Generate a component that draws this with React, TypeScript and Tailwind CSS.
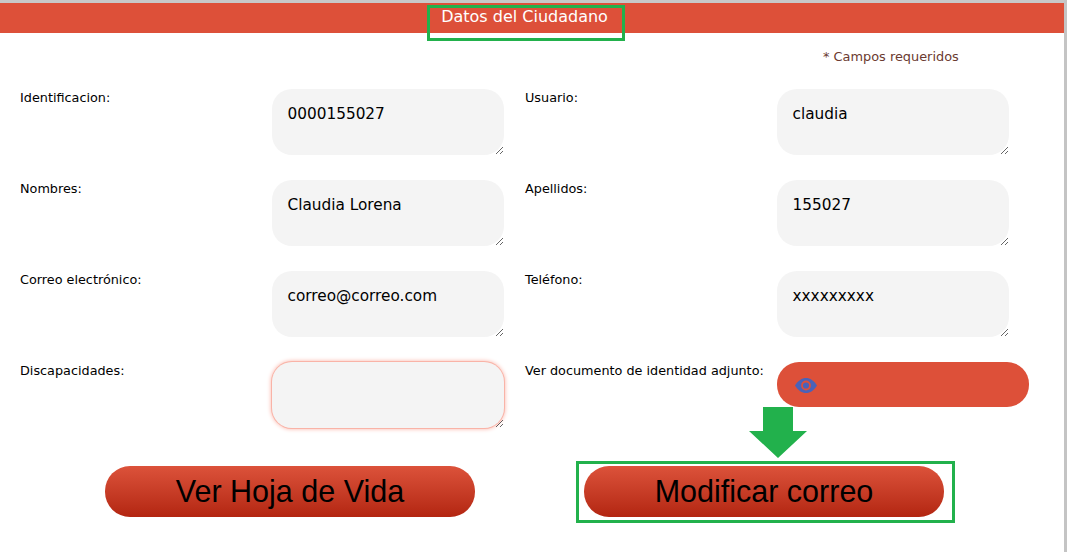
import * as React from 'react';

const fieldClass =
  'w-[232px] h-[66px] rounded-[20px] bg-[#f4f4f4] pl-[15.5px] pr-2 pt-[14px] text-[15.3px] leading-[22px] text-black outline-none';

const Label: React.FC<{ text: string }> = ({ text }) => (
  <label className="w-[252px] shrink-0 pt-[1px] text-[12.8px] leading-4 text-black">{text}</label>
);

const Field: React.FC<{ label: string; value: string }> = ({ label, value }) => (
  <div className="flex items-start">
    <Label text={label} />
    <textarea className={fieldClass} defaultValue={value} />
  </div>
);

const App: React.FC = () => {
  return (
    <div className="relative h-[560px] w-[1067px] overflow-hidden bg-white font-['DejaVu_Sans',sans-serif]">
      <div className="h-[3px] bg-[#c8c8c8]" />

      {/* Header */}
      <div className="mr-[3px] flex h-[30px] justify-center bg-[#dd5039] pr-[15px] pt-[4px] text-[16px] leading-5 text-white">
        Datos del Ciudadano
      </div>
      <div className="absolute left-[427px] top-[5px] h-[36px] w-[198px] border-[3px] border-[#22b14c]" />

      <p className="ml-[823px] mt-[16px] text-[12.9px] leading-4 text-[#6b3a30]">* Campos requeridos</p>

      {/* Form */}
      <div className="ml-[20px] mt-[24px] grid grid-cols-[505px_1fr] gap-y-[25px]">
        <Field label="Identificacion:" value="0000155027" />
        <Field label="Usuario:" value="claudia" />
        <Field label="Nombres:" value="Claudia Lorena" />
        <Field label="Apellidos:" value="155027" />
        <Field label="Correo electrónico:" value="correo@correo.com" />
        <Field label="Teléfono:" value="xxxxxxxxx" />
        <div className="flex items-start">
          <Label text="Discapacidades:" />
          <textarea
            className={`${fieldClass} shadow-[0_0_0_1px_#f9b3a7,0_0_4px_1px_#f9b3a7]`}
            defaultValue=""
          />
        </div>
        <div className="flex items-start">
          <Label text="Ver documento de identidad adjunto:" />
          <div className="flex h-[45px] w-[252px] items-center rounded-[22px] bg-[#dd5039] pl-[18px]">
            <svg width="22" height="15" viewBox="0 0 22 15" className="mt-[1px]">
              <path d="M0 7.5C3 2.5 7 0 11 0s8 2.5 11 7.5C19 12.5 15 15 11 15S3 12.5 0 7.5Z" fill="#4a62b8" />
              <circle cx="11" cy="7.5" r="4" fill="none" stroke="#dd5039" strokeWidth="1.8" />
            </svg>
          </div>
        </div>
      </div>

      {/* Actions */}
      <div className="ml-[105px] mt-[38px] flex gap-[109px] font-['Liberation_Sans',sans-serif] text-[30.5px] text-black">
        <button className="h-[51px] w-[370px] rounded-[25px] bg-gradient-to-b from-[#dc523a] to-[#b32510]">
          Ver Hoja de Vida
        </button>
        <button className="h-[51px] w-[360px] rounded-[25px] bg-gradient-to-b from-[#dc523a] to-[#b32510]">
          Modificar correo
        </button>
      </div>

      {/* Green annotations */}
      <div className="absolute left-[576px] top-[461px] h-[62px] w-[379px] border-[3px] border-[#22b14c]" />
      <svg className="absolute left-[749px] top-[407px]" width="58" height="51" viewBox="0 0 58 51">
        <path d="M14 0H44V24H58L29 51L0 24H14Z" fill="#22b14c" />
      </svg>

      <div className="absolute right-0 top-0 h-[552px] w-[3px] bg-[#c4c4c4]" />
    </div>
  );
};

export default App;
